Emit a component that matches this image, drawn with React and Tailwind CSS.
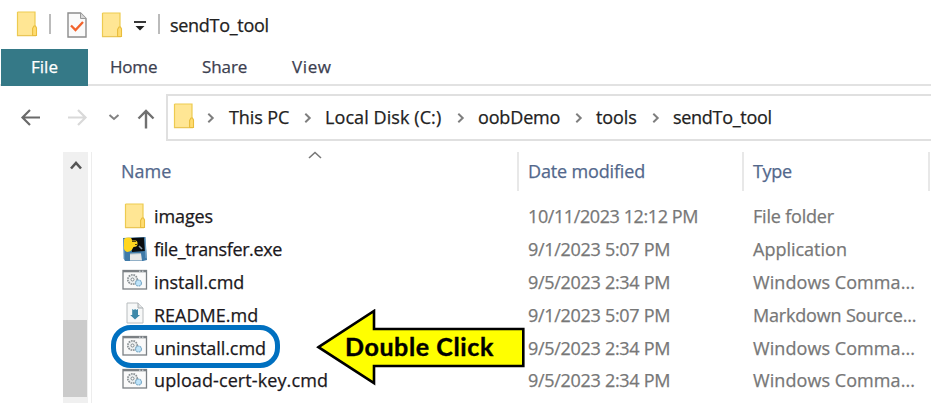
import React from "react";

function Folder() {
  return (
    <svg width="22" height="26" viewBox="0 0 22 26" className="shrink-0">
      <path d="M1 1h18v17.500h2V25H1z" fill="#ffe694" />
      <path d="M1.500 1h17.500v17M1.500 1v24" fill="none" stroke="#edcb50" strokeWidth="1.200" />
      <path d="M1 24.600h19" stroke="#eac657" strokeWidth="1.300" />
      <path d="M16.600 24.500v-7l1.400-2.500h1.500l1 2v7.500z" fill="#ffdc70" stroke="#e8bd3d" strokeWidth="1.100" />
    </svg>
  );
}

function CheckedPage() {
  return (
    <svg width="20" height="26" viewBox="0 0 20 26" className="shrink-0">
      <path d="M1 1h12.500L19 6.500V25H1z" fill="#fafafa" stroke="#8c8c8c" strokeWidth="1.400" />
      <path d="M13.500 1v5.500H19" fill="#d8d8d8" stroke="#999" />
      <path d="M4 13.500l4.500 4.500L16 10" fill="none" stroke="#f2622b" strokeWidth="2.300" />
    </svg>
  );
}

function ExeIcon() {
  return (
    <svg width="26" height="26" viewBox="0 0 26 26" className="shrink-0">
      <path d="M1 2L23.500 1 25 24 21 25 3 25 2 23z" fill="#3f7aa8" />
      <path d="M2 3v20M23 3l1 19" stroke="#75a7cb" />
      <path d="M8 2l14-.5.800 13.500L10 16z" fill="#080b0e" />
      <path d="M2 4q0-2.500 4-2.500 4-.500 4 3h4q2 1 1.500 4-.5 2.500-4 2.500-1 3-4 4.500l-2.500.500Q1 14 2 10z" fill="#ffd61f" />
      <path d="M10 5.500h4M13 8.500h2" stroke="#584a10" strokeWidth="1.200" />
      <path d="M17 10l3 3" stroke="#8798a5" strokeWidth="1.600" />
      <path d="M8 18l11-.5 1 7H8z" fill="#e6e6e6" />
      <path d="M8 18l11-.5" stroke="#aabac5" />
    </svg>
  );
}

function CmdIcon() {
  return (
    <svg width="26" height="22" viewBox="0 0 26 22" className="mb-[3px] shrink-0">
      <rect x="1" y="1.500" width="23.500" height="18.500" fill="#fafafa" stroke="#7b8084" strokeWidth="1.300" />
      <path d="M1 2.300h23.500" stroke="#7b8084" strokeWidth="2" />
      <path d="M17 2.200h1.500M20 2.200h1.500" stroke="#dde3e8" />
      <circle cx="10.500" cy="10.500" r="4.700" fill="#eceff0" stroke="#8b9194" strokeWidth="1.700" strokeDasharray="1.700 .8" />
      <circle cx="10.500" cy="10.500" r="1.500" fill="#fff" stroke="#7f878b" />
      <circle cx="16.500" cy="14" r="3" fill="#bfe4fa" stroke="#7eacc8" strokeWidth="1.200" strokeDasharray="2 .5" />
    </svg>
  );
}

function MdIcon() {
  return (
    <svg width="18" height="22" viewBox="0 0 18 22" className="mb-[3px] shrink-0">
      <path d="M1 1h11l5 5v15H1z" fill="#f7f8f8" stroke="#b8bcbe" />
      <path d="M12 1v5h5" fill="#e4e6e7" stroke="#a7acaf" />
      <path d="M6.200 7l1.700 1 1.200-1 1.200 1 1.700-1v6h2L9 17.500 4.200 13h2z" fill="#3d88a8" />
    </svg>
  );
}

function Crumb({ children, className }) {
  return <span className={`shrink-0 ${className}`}>{children}</span>;
}

function Chevron() {
  return (
    <svg width="8" height="12" viewBox="0 0 8 12" className="mt-[2px] shrink-0">
      <path d="M1.300 1.800L5.700 6l-4.400 4.200" fill="none" stroke="#7e7e7e" strokeWidth="2" />
    </svg>
  );
}

const files = [
  { icon: <Folder />, name: "images", date: "10/11/2023 12:12 PM", type: "File folder", n: "tracking-[-0.1px]", d: "tracking-[-0.41px]", t: "tracking-[-0.2px]" },
  { icon: <ExeIcon />, name: "file_transfer.exe", date: "9/1/2023 5:07 PM", type: "Application", n: "tracking-[-0.38px]", d: "tracking-[-0.3px]", t: "tracking-[0px]" },
  { icon: <CmdIcon />, name: "install.cmd", date: "9/5/2023 2:34 PM", type: "Windows Comma...", n: "tracking-[-0.04px]", d: "tracking-[-0.3px]", t: "tracking-[0.07px]" },
  { icon: <MdIcon />, name: "README.md", date: "9/1/2023 5:07 PM", type: "Markdown Source...", n: "tracking-[0px]", d: "tracking-[-0.3px]", t: "tracking-[-0.18px]" },
  { icon: <CmdIcon />, name: "uninstall.cmd", date: "9/5/2023 2:34 PM", type: "Windows Comma...", n: "tracking-[-0.06px]", d: "tracking-[-0.3px]", t: "tracking-[0.07px]" },
  { icon: <CmdIcon />, name: "upload-cert-key.cmd", date: "9/5/2023 2:34 PM", type: "Windows Comma...", n: "tracking-[0.1px]", d: "tracking-[-0.3px]", t: "tracking-[0.07px]" },
];

export default function App() {
  return (
    <div className="relative flex h-[403px] w-[933px] flex-col overflow-hidden bg-white font-['Open_Sans','Noto_Sans',sans-serif] text-[18px] leading-6 whitespace-nowrap text-[#222] [-webkit-text-stroke:0.25px_currentColor]">
      <header className="flex h-[49px] shrink-0 items-center pl-4">
        <div className="-mt-[2px] flex"><Folder /></div>
        <div className="-mt-[2px] ml-[11px] h-5 w-[2px] bg-[#bbb]" />
        <div className="ml-4 flex"><CheckedPage /></div>
        <div className="ml-[14px] flex"><Folder /></div>
        <svg width="12" height="12" viewBox="0 0 12 12" className="ml-[11px] mt-[3px]">
          <path d="M0 2h12" stroke="#222" strokeWidth="1.800" />
          <path d="M1.500 6h9L6 10.500z" fill="#222" />
        </svg>
        <div className="-mt-[2px] ml-[12px] h-5 w-[2px] bg-[#bbb]" />
        <span className="ml-[10px] tracking-[-0.3px]">sendTo_tool</span>
      </header>

      <nav className="mr-[2px] flex h-[37px] shrink-0 items-center border-b-2 border-[#e2e2e2] pl-px text-[#3c4050]">
        <div className="mt-[2px] flex h-[37px] w-[87px] items-center justify-center bg-[#357987] pb-[2px] text-[17px] text-white">File</div>
        <span className="ml-[22px] w-[92px] text-[17px] tracking-[-0.2px]">Home</span>
        <span className="w-[90px] text-[17px] tracking-[-0.1px]">Share</span>
        <span className="text-[17px] tracking-[0.6px]">View</span>
      </nav>

      <div className="mt-2 mr-[2px] flex h-[47px] shrink-0 items-center">
        <svg width="166" height="46" viewBox="0 0 166 46" fill="none" className="shrink-0">
          <path d="M40 22.500H23M30 15L22.500 22.500l7.500 7.500" stroke="#6a6a6a" strokeWidth="2.200" />
          <path d="M68 22.500h17M78 15l7.500 7.500-7.500 7.500" stroke="#d9d9d9" strokeWidth="2.200" />
          <path d="M109.500 20l4.500 4 4.500-4" stroke="#828282" strokeWidth="2" />
          <path d="M146 33.500V16M138.500 23.500l7.500-7.500 7.500 7.500" stroke="#707070" strokeWidth="2.400" />
        </svg>
        <div className="flex h-full flex-1 items-center border-2 border-r-0 border-[#e0e0e0] pb-[2px] pl-[6px]">
          <div className="-mt-[2px] -ml-px flex"><Folder /></div>
          <div className="ml-3 flex w-[22px]"><Chevron /></div>
          <Crumb className="w-[75px] tracking-[-0.1px]">This PC</Crumb>
          <div className="flex w-[21px]"><Chevron /></div>
          <Crumb className="w-[132px] tracking-[0.08px]">Local Disk (C:)</Crumb>
          <div className="flex w-[21px]"><Chevron /></div>
          <Crumb className="w-[97px] tracking-[-0.15px]">oobDemo</Crumb>
          <div className="flex w-[21px]"><Chevron /></div>
          <Crumb className="w-[56px] tracking-[-0.1px]">tools</Crumb>
          <div className="flex w-[21px]"><Chevron /></div>
          <Crumb className="tracking-[-0.3px]">sendTo_tool</Crumb>
        </div>
      </div>

      <main className="flex h-[262px] shrink-0 pt-[11px]">
        <aside className="ml-[63px] flex h-[251px] w-[25px] shrink-0 flex-col items-center bg-[#f0f0f0]">
          <svg width="14" height="14" viewBox="0 0 14 14" className="mt-[7px] shrink-0">
            <path d="M2 9.500L7 4l5 5.500" fill="none" stroke="#555" strokeWidth="2.600" />
          </svg>
          <div className="mt-[147px] h-[77px] w-full shrink-0 border-r border-[#f0f0f0] bg-[#cbcbcb]" />
        </aside>
        <section className="ml-[3px] flex flex-1 flex-col border-l border-[#ededed]">
          <div className="flex h-[39px] shrink-0 pr-[3px] text-[#53688c]">
            <div className="flex w-[427px] items-center border-r-2 border-[#e8e8e8] pb-[2px] pl-[29px]">
              <span className="w-[187px]">Name</span>
              <svg width="14" height="9" viewBox="0 0 14 9" className="mb-[30px]">
                <path d="M1 7l6-5.500L13 7" fill="none" stroke="#777" strokeWidth="1.600" />
              </svg>
            </div>
            <div className="flex w-[225px] items-center border-r-2 border-[#e8e8e8] pb-[2px] pl-[9px] tracking-[-0.15px]">Date modified</div>
            <div className="flex flex-1 items-center border-r-2 border-[#e8e8e8] pb-[2px] pl-[9px] tracking-[-0.3px]">Type</div>
          </div>
          <div className="mt-[9px] flex flex-col">
            {files.map((f) => (
              <div key={f.name} className="flex h-[32.8px] items-center text-[#777]">
                <div className="ml-[30px] flex w-[26px] shrink-0 justify-center">{f.icon}</div>
                <span className={`ml-[6px] w-[374px] shrink-0 text-[#1b1820] ${f.n}`}>{f.name}</span>
                <span className={`w-[225px] shrink-0 ${f.d}`}>{f.date}</span>
                <span className={f.t}>{f.type}</span>
              </div>
            ))}
          </div>
        </section>
      </main>

      <div className="absolute top-[325px] left-[111px] h-[43px] w-[169px] rounded-[20px] border-[5px] border-[#0070c0]" />
      <div className="absolute top-[309px] left-[316px] h-[77px] w-[209px]">
        <svg width="209" height="77" viewBox="0 0 209 77" className="block">
          <path d="M2.500 38.200L58 2v18h149.300v37H58v17z" fill="#ffff00" stroke="#000" strokeWidth="2.600" />
        </svg>
        <span className="absolute top-[23px] left-[29px] font-['Lato','Open_Sans',sans-serif] text-[25px] leading-7 font-bold tracking-[0.6px] text-black [-webkit-text-stroke:0.4px_currentColor]">Double Click</span>
      </div>
    </div>
  );
}
